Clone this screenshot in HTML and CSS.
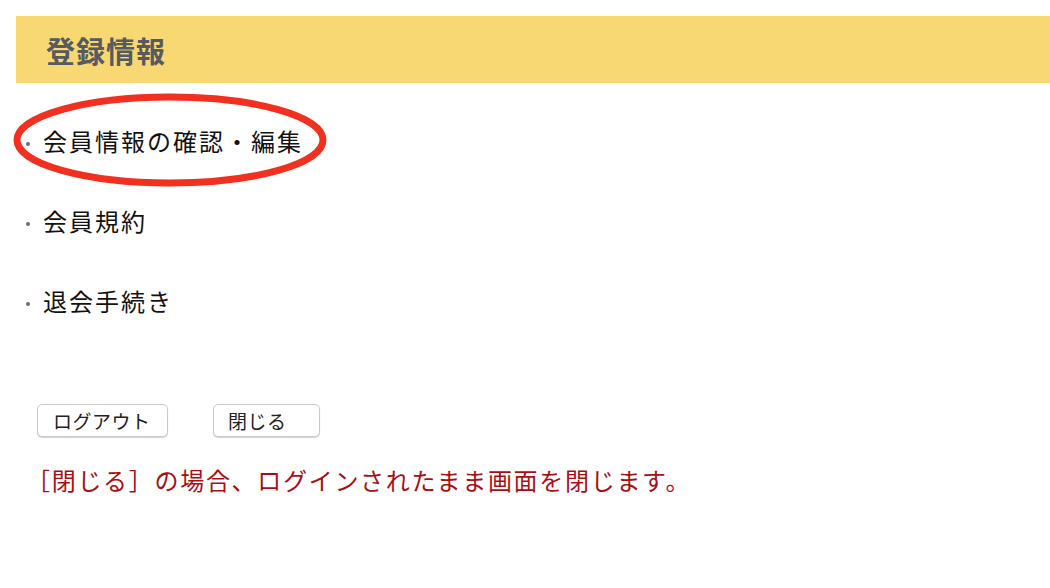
FILE: index.html
```html
<!DOCTYPE html>
<html lang="ja">
<head>
<meta charset="utf-8">
<title>登録情報</title>
<link rel="stylesheet" href="styles.css">
</head>
<body>
<div class="page">
  <div class="header"><h1 class="title">登録情報</h1></div>
  <ul class="menu">
    <li class="menu-item">会員情報の確認・編集</li>
    <li class="menu-item">会員規約</li>
    <li class="menu-item">退会手続き</li>
  </ul>
  <div class="buttons">
    <button class="btn btn-logout">ログアウト</button>
    <button class="btn btn-close">閉じる</button>
  </div>
  <p class="note">［閉じる］の場合、ログインされたまま画面を閉じます。</p>
</div>
<svg class="annotation" width="340" height="100" viewBox="0 0 340 100">
  <ellipse cx="157" cy="47" rx="153" ry="43" fill="none" stroke="#f2301f" stroke-width="7"/>
</svg>
</body>
</html>
```
FILE: styles.css
```css
html, body {
  margin: 0;
  padding: 0;
  background: #ffffff;
}
body {
  font-family: "Noto Sans CJK JP", "Noto Sans", sans-serif;
  color: #111;
  position: relative;
}
.page {
  padding: 16px 0 0 16px;
}
.header {
  height: 67px;
  background: #f8d872;
  display: flex;
  align-items: center;
  padding-left: 30px;
}
.title {
  margin: 0;
  font-size: 29px;
  font-weight: 700;
  color: #575a5e;
  letter-spacing: 1px;
}
.menu {
  list-style: none;
  margin: 17px 0 0 0;
  padding: 0;
}
.menu-item {
  height: 80px;
  display: flex;
  align-items: center;
  font-size: 24px;
  letter-spacing: 2px;
  padding-left: 27px;
  position: relative;
  color: #111;
}
.menu-item::before {
  content: "";
  position: absolute;
  left: 10px;
  top: 42px;
  width: 4px;
  height: 4px;
  border-radius: 50%;
  background: #6a6f74;
}
.buttons {
  display: flex;
  gap: 45px;
  margin-top: 64px;
  padding-left: 21px;
}
.btn {
  height: 33px;
  background: #fff;
  border: 1px solid #c9c9c9;
  border-radius: 5px;
  box-shadow: 0 1px 1px rgba(0,0,0,0.18);
  font-family: "Noto Sans CJK JP", sans-serif;
  font-size: 19px;
  letter-spacing: 0.5px;
  color: #222;
  text-align: left;
  padding: 0 0 0 15px;
  line-height: 1;
}
.btn-logout { width: 131px; }
.btn-close { width: 107px; padding-left: 14px; }
.note {
  margin: 26px 0 0 10px;
  font-size: 24px;
  line-height: 34px;
  color: #a60f14;
  letter-spacing: 1.7px;
}
.annotation {
  position: absolute;
  left: 13px;
  top: 93px;
}
```
